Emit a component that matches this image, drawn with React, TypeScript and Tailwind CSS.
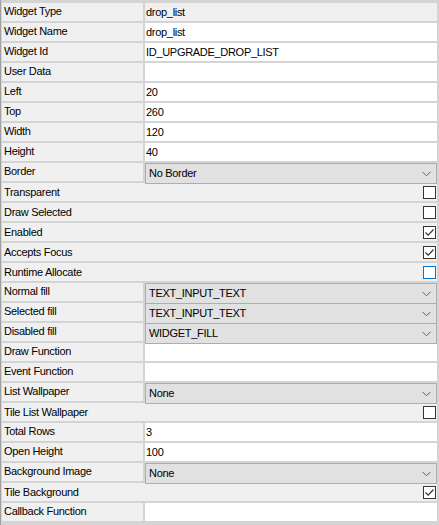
import React from "react";

type Row =
  | { label: string; kind: "text"; value: string; readonly?: boolean }
  | { label: string; kind: "select"; value: string }
  | { label: string; kind: "check"; checked: boolean; focus?: boolean };

const rows: Row[] = [
  { label: "Widget Type", kind: "text", value: "drop_list", readonly: true },
  { label: "Widget Name", kind: "text", value: "drop_list" },
  { label: "Widget Id", kind: "text", value: "ID_UPGRADE_DROP_LIST" },
  { label: "User Data", kind: "text", value: "" },
  { label: "Left", kind: "text", value: "20" },
  { label: "Top", kind: "text", value: "260" },
  { label: "Width", kind: "text", value: "120" },
  { label: "Height", kind: "text", value: "40" },
  { label: "Border", kind: "select", value: "No Border" },
  { label: "Transparent", kind: "check", checked: false },
  { label: "Draw Selected", kind: "check", checked: false },
  { label: "Enabled", kind: "check", checked: true },
  { label: "Accepts Focus", kind: "check", checked: true },
  { label: "Runtime Allocate", kind: "check", checked: false, focus: true },
  { label: "Normal fill", kind: "select", value: "TEXT_INPUT_TEXT" },
  { label: "Selected fill", kind: "select", value: "TEXT_INPUT_TEXT" },
  { label: "Disabled fill", kind: "select", value: "WIDGET_FILL" },
  { label: "Draw Function", kind: "text", value: "" },
  { label: "Event Function", kind: "text", value: "" },
  { label: "List Wallpaper", kind: "select", value: "None" },
  { label: "Tile List Wallpaper", kind: "check", checked: false },
  { label: "Total Rows", kind: "text", value: "3" },
  { label: "Open Height", kind: "text", value: "100" },
  { label: "Background Image", kind: "select", value: "None" },
  { label: "Tile Background", kind: "check", checked: true },
  { label: "Callback Function", kind: "text", value: "" },
];

function Chevron() {
  return (
    <svg width="9" height="6" viewBox="0 0 9 6" className="shrink-0">
      <path d="M0.5 0.8 L4.5 4.8 L8.5 0.8" fill="none" stroke="#606060" strokeWidth="1" />
    </svg>
  );
}

function Check({ checked, focus }: { checked: boolean; focus?: boolean }) {
  return (
    <div
      className={
        "w-[13px] h-[13px] bg-white border flex items-center justify-center " +
        (focus ? "border-[#0078d7]" : "border-[#333333]")
      }
    >
      {checked && (
        <svg width="11" height="11" viewBox="0 0 11 11">
          <path d="M1.5 5.5 L4.2 8.2 L9.5 2.5" fill="none" stroke="#333333" strokeWidth="1.2" />
        </svg>
      )}
    </div>
  );
}

export default function App() {
  return (
    <div
      className="w-[439px] h-[525px] bg-[#d4d4d4] border-l border-[#a0a0a0] pt-[3px] pl-[1px] pr-[2px] overflow-hidden text-[11px] tracking-[-0.3px] text-black leading-none"
      style={{ fontFamily: '"Liberation Sans", Arial, sans-serif' }}
    >
      <div className="grid grid-cols-[141px_1fr] auto-rows-[18px] gap-x-[2px] gap-y-[2px]">
        {rows.map((r, i) => {
          if (r.kind === "check") {
            return (
              <div
                key={i}
                className="col-span-2 bg-[#f0f0f0] flex items-center justify-between pl-[2px] pr-[1px]"
              >
                <span className="mt-[1px]">{r.label}</span>
                <Check checked={r.checked} focus={r.focus} />
              </div>
            );
          }
          return (
            <React.Fragment key={i}>
              <div className="bg-[#f0f0f0] flex items-center pl-[2px]">
                <span className="-mt-[1px]">{r.label}</span>
              </div>
              {r.kind === "text" ? (
                <div
                  className={
                    "flex items-center pl-[1px] " +
                    (r.readonly ? "bg-[#f0f0f0]" : "bg-white")
                  }
                >
                  <span>{r.value}</span>
                </div>
              ) : (
                <div className="relative">
                  <div className="absolute left-0 right-0 top-0 h-[21px] bg-[#e1e1e1] border border-[#adadad] flex items-center justify-between pl-[3px] pr-[5px]">
                    <span>{r.value}</span>
                    <Chevron />
                  </div>
                </div>
              )}
            </React.Fragment>
          );
        })}
      </div>
    </div>
  );
}
